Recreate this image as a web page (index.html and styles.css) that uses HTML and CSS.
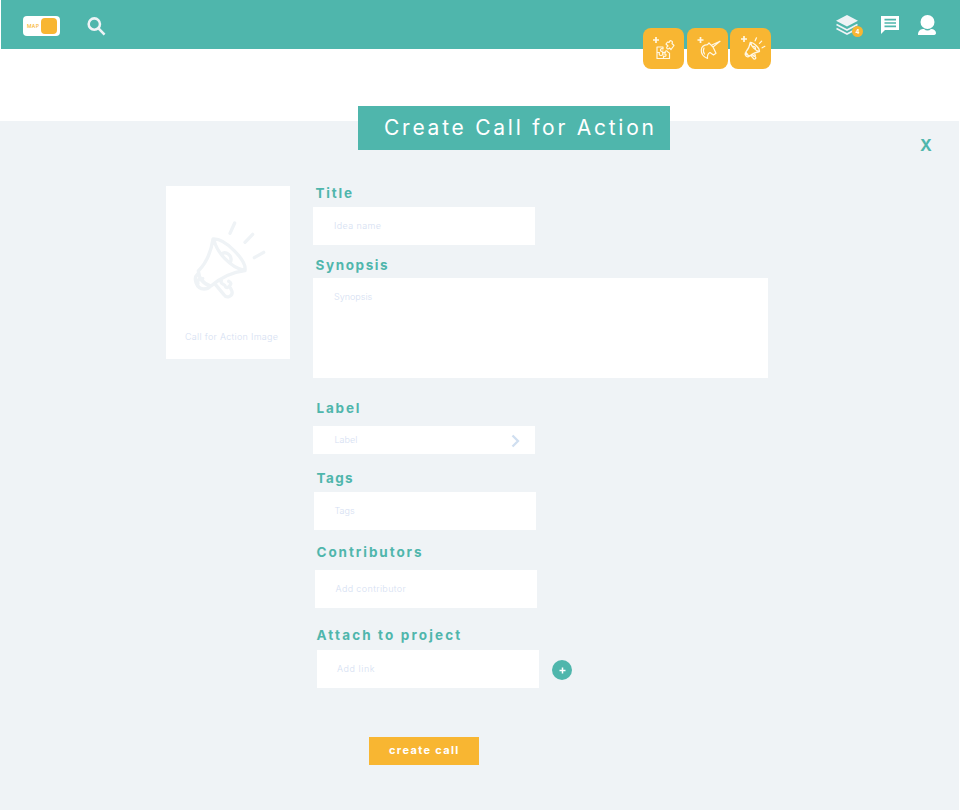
FILE: index.html
```html
<!DOCTYPE html>
<html lang="en">
<head>
<meta charset="utf-8">
<title>Create Call for Action</title>
<link rel="stylesheet" href="styles.css">
</head>
<body>
<svg class="defs" aria-hidden="true">
  <symbol id="megaphone" viewBox="95 120 225 240">
    <path d="M158 177C152 217 139 248 114 273C116 296 130 312 152 318C181 293 212 277 254 272C260 241 193 174 158 177ZM161 180C169 216 210 263 252 271M183 222C197 212 217 226 211 245M112 282C98 294 107 326 131 327Q143 327 149 320M127 296C117 292 110 302 113 311M165 313L190 343C199 357 218 349 215 334L211 325M183 302C178 316 193 308 196 321Q202 326 208 317Q216 310 205 304M209 160L223 129M254 187L277 163M282 233L310 217"/>
  </symbol>
</svg>

<header class="topbar">
  <div class="switch"><span class="switch-text">MAP</span><span class="switch-knob"></span></div>
  <svg class="search" viewBox="0 0 20 20"><circle cx="7.5" cy="7.2" r="5.8"/><path d="M11.8 11.7L18 18"/></svg>
  <nav class="tools">
    <div class="stack">
      <svg viewBox="0 0 24 22" width="24" height="22"><path class="solid" d="M11 1L22 6.8L11 12.5L0 6.8Z"/><path class="line" d="M.5 10.5L11 16L21.5 10.5M.5 14.5L11 20L21.5 14.5"/></svg>
      <span class="badge">4</span>
    </div>
    <svg class="chat" viewBox="0 0 18 18"><path class="solid" d="M0 0H18V14H4L0 18Z"/><path class="rule" d="M3.5 3.7H15M3.5 7H15M3.5 10.3H15"/></svg>
    <svg class="user" viewBox="0 0 18 20"><circle cx="9.5" cy="7" r="7"/><path d="M0 20C0 15 3 14 6 14Q9.500 17 13 14C16 14 18 16 18 18Q18 20 15 20Z"/></svg>
  </nav>
  <div class="quick">
    <button class="tile"><svg viewBox="0 0 41 41"><path class="plus" d="M10 12H16M13 9V15"/><path d="M20 19H14V30.500H26.500V25M14 24.500H16.500Q15.500 27.500 18 27.500Q20.500 27.500 19.500 24.500H22.500M20 19V21Q17.500 20 17.500 22Q17.500 24 20 23M20.500 30V28Q23 29 23 27Q23 25.500 21 26M22 24.500Q22 22.500 24 23Q25.500 25 26.500 25M23 16L25 18Q23 19 24 20.500Q25.500 21.500 26.500 20L28 21.500L31 17.500L29 15.500Q30 13.500 28.500 13Q27 12 26 14.500L24.500 14Z"/></svg></button>
    <button class="tile"><svg viewBox="0 0 41 41"><path class="plus" d="M10.500 12H16.500M13.500 9V15"/><path d="M20.500 30.500C17 29 14 26 14.300 22C14.500 18.500 17 17 20.500 16.700L22 15L24.300 17.300L33 13.300L26 19L29 25.300L26.500 27L23 24.500Q20 26 20.500 30.500M24.300 17.300L26 19M17 20Q15.500 23 17.500 26"/></svg></button>
    <button class="tile"><svg viewBox="0 0 41 41"><path class="plus" d="M11 11H17M14 8V14"/></svg><svg class="mini"><use href="#megaphone"/></svg></button>
  </div>
</header>

<main class="panel">
  <h1 class="heading">Create Call for Action</h1>
  <button class="close">X</button>
  <div class="layout">
    <div class="picture">
      <svg class="picture-icon"><use href="#megaphone"/></svg>
      <span class="picture-text">Call for Action Image</span>
    </div>
    <form class="form">
      <div class="field title"><label>Title</label><div class="input"><span>Idea name</span></div></div>
      <div class="field synopsis"><label>Synopsis</label><div class="input"><span>Synopsis</span></div></div>
      <div class="field kind"><label>Label</label><div class="input"><span>Label</span><svg class="chevron" viewBox="0 0 9 14"><path d="M1.500 1.500L7 7L1.500 12.500"/></svg></div></div>
      <div class="field tags"><label>Tags</label><div class="input"><span>Tags</span></div></div>
      <div class="field people"><label>Contributors</label><div class="input"><span>Add contributor</span></div></div>
      <div class="field attach"><label>Attach to project</label><div class="row"><div class="input"><span>Add link</span></div><svg class="add" viewBox="0 0 20 20"><circle cx="10" cy="10" r="10"/><path d="M7.500 10.500H13.500M10.500 7.500V13.500"/></svg></div></div>
      <button class="submit" type="button"><span>create call</span></button>
    </form>
  </div>
</main>
</body>
</html>
```
FILE: styles.css
```css
* { box-sizing: border-box; }
body { margin: 0; background: #fff; font-family: Inter, "Open Sans", sans-serif; }
button { border: 0; padding: 0; font-family: inherit; }
svg { display: block; flex: none; fill: none; }
.defs { position: absolute; width: 0; height: 0; }

.topbar { position: relative; display: flex; align-items: flex-start; height: 49px; margin-left: 1px; padding-left: 22px; background: #4fb6ac; }
.switch { display: flex; align-items: center; justify-content: space-between; width: 37px; height: 20px; margin-top: 16px; padding: 0 3px 0 4px; border-radius: 4px; background: #fff; }
.switch-text { color: #f8b632; font-size: 5px; font-weight: 500; letter-spacing: .3px; }
.switch-knob { width: 16px; height: 16px; border-radius: 4px; background: #f8b632; }
.search { width: 19.5px; height: 19.5px; margin: 17px 0 0 26.5px; stroke: #eff3f6; stroke-width: 2.6; }
.tools { display: flex; margin-left: auto; padding: 14px 24px 0 0; }
.stack { position: relative; width: 28px; margin-right: 17px; }
.solid { fill: #eff3f6; }
.line { stroke: #eff3f6; stroke-width: 1.6; }
.badge { position: absolute; left: 16px; top: 12px; width: 11px; height: 11px; border-radius: 50%; background: #f8b632; color: #fff; font-size: 6px; font-weight: 700; line-height: 11px; text-align: center; }
.chat { width: 18px; height: 18px; margin: 2px 19px 0 0; }
.chat .solid { fill: #fff; }
.rule { stroke: #4fb6ac; stroke-width: 1.7; }
.user { width: 18px; height: 20px; margin-top: 1px; fill: #fff; }
.quick { position: absolute; left: 642px; top: 28px; display: flex; gap: 2.5px; }
.tile { position: relative; width: 41px; height: 41px; border-radius: 8px; background: #f8b632; }
.tile svg { width: 41px; height: 41px; stroke: #fff7e3; stroke-width: 1.2; stroke-linecap: round; stroke-linejoin: round; }
.tile .plus { stroke-width: 1.7; stroke-linecap: butt; }
.tile .mini { position: absolute; left: 13.5px; top: 9px; width: 22px; height: 23px; stroke-width: 13; }

.panel { position: relative; height: 689px; margin: 72px 1px 0 0; padding-top: 65px; background: #eff3f6; }
.heading { position: absolute; left: 358px; top: -15.5px; width: 312px; height: 44.5px; margin: 0; padding-left: 26px; background: #4fb6ac; color: #fff; font-size: 21px; font-weight: 400; line-height: 43px; letter-spacing: 2.75px; white-space: nowrap; }
.close { position: absolute; left: 920px; top: 14px; background: none; color: #4fb6ac; font-size: 16px; font-weight: 700; line-height: 20px; }
.layout { display: flex; align-items: flex-start; padding-left: 166px; }
.picture { display: flex; flex-direction: column; width: 124px; height: 173px; padding: 34px 0 0 19px; background: #fff; }
.picture-icon { width: 75px; height: 80px; margin-left: 7px; stroke: #eff3f6; stroke-width: 10; stroke-linecap: round; stroke-linejoin: round; }
.picture-text { margin-top: 31px; color: #d5e0f2; font-size: 9px; font-weight: 300; line-height: 12px; letter-spacing: .3px; white-space: nowrap; }

.form { margin: -2px 0 0 23px; }
.field label { display: block; height: 18px; margin-left: 3.5px; color: #4fb6ac; font-size: 13.5px; font-weight: 700; line-height: 18px; white-space: nowrap; }
.input { display: flex; align-items: center; width: 222px; height: 38px; padding-left: 21px; background: #fff; color: #d5e0f2; font-size: 9px; font-weight: 300; line-height: 12px; }
.row { display: flex; align-items: center; }
.title label { margin: 0 0 5px 2.5px; letter-spacing: 1.8px; }
.title span { letter-spacing: .4px; }
.synopsis { margin-top: 11px; }
.synopsis label { margin: 0 0 4px 2.5px; letter-spacing: 1.6px; }
.synopsis .input { align-items: flex-start; width: 455px; height: 100px; padding-top: 13px; }
.kind { margin-top: 21px; }
.kind label { margin-bottom: 9px; letter-spacing: 1.8px; }
.kind .input { height: 28px; padding: 0 15px 0 21.5px; }
.chevron { width: 9px; height: 14px; margin: 1px 0 0 auto; stroke: #d0dff0; stroke-width: 2.3; }
.tags { margin-top: 15px; }
.tags label { margin-bottom: 5px; letter-spacing: 1.4px; }
.tags .input { margin-left: 1px; padding-left: 20.5px; }
.people { margin-top: 13px; }
.people label { margin-bottom: 9px; letter-spacing: 1.92px; }
.people .input { margin-left: 2px; padding-left: 20.5px; }
.people span { letter-spacing: .37px; }
.attach { margin-top: 18px; }
.attach label { margin-bottom: 6px; letter-spacing: 2.15px; }
.attach .input { margin-left: 4px; padding-left: 20px; }
.attach span { letter-spacing: .55px; }
.add { width: 20px; height: 20px; margin: 2px 0 0 13px; }
.add circle { fill: #4fb6ac; }
.add path { stroke: #fff; stroke-width: 1.5; }
.submit { display: flex; align-items: center; width: 110px; height: 28px; margin: 49px 0 0 56px; padding: 0 0 2px 20px; background: #f8b632; color: #fff; font-size: 11px; font-weight: 700; letter-spacing: 1.35px; white-space: nowrap; }
```
